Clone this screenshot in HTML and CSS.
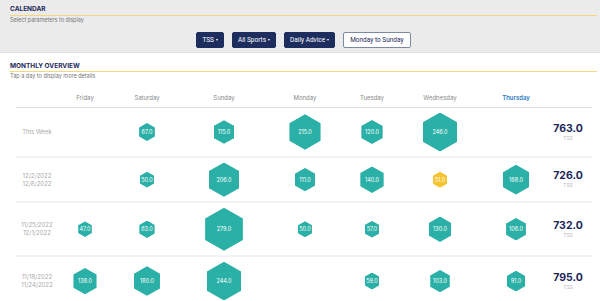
FILE: index.html
```html
<!DOCTYPE html>
<html lang="en">
<head>
  <meta charset="UTF-8">
  <meta name="viewport" content="width=device-width, initial-scale=1.0">
  <title>Calendar – Monthly Overview</title>
  <link rel="stylesheet" href="styles.css">
</head>
<body>
  <div class="top">
    <h2 class="sec-title">CALENDAR</h2>
    <p class="sec-sub">Select parameters to display</p>
    <div class="filters">
      <button class="btn">TSS <span class="caret"></span></button>
      <button class="btn">All Sports <span class="caret"></span></button>
      <button class="btn">Daily Advice <span class="caret"></span></button>
      <button class="btn btn-light">Monday to Sunday</button>
    </div>
  </div>

  <div class="overview">
    <h2 class="sec-title">MONTHLY OVERVIEW</h2>
    <p class="sec-sub">Tap a day to display more details</p>

    <div class="cal">
      <div class="row head">
        <div></div>
        <div>Friday</div>
        <div>Saturday</div>
        <div>Sunday</div>
        <div>Monday</div>
        <div>Tuesday</div>
        <div>Wednesday</div>
        <div class="today">Thursday</div>
        <div></div>
      </div>

      <div class="row">
        <div class="label">This Week</div>
        <div></div>
        <div><span class="hex" style="--h:17.9px">67.0</span></div>
        <div><span class="hex" style="--h:23.6px">115.0</span></div>
        <div><span class="hex" style="--h:35.4px">215.0</span></div>
        <div><span class="hex" style="--h:24.2px">120.0</span></div>
        <div><span class="hex" style="--h:39px">246.0</span></div>
        <div></div>
        <div class="total"><b>763.0</b><small>TSS</small></div>
      </div>

      <div class="row">
        <div class="label">12/2/2022<br>12/8/2022</div>
        <div></div>
        <div><span class="hex" style="--h:15.9px">50.0</span></div>
        <div><span class="hex" style="--h:34.3px">206.0</span></div>
        <div><span class="hex" style="--h:23.1px">111.0</span></div>
        <div><span class="hex" style="--h:26.5px">140.0</span></div>
        <div><span class="hex low" style="--h:16px">51.0</span></div>
        <div><span class="hex" style="--h:29.8px">168.0</span></div>
        <div class="total"><b>726.0</b><small>TSS</small></div>
      </div>

      <div class="row">
        <div class="label">11/25/2022<br>12/1/2022</div>
        <div><span class="hex" style="--h:15.5px">47.0</span></div>
        <div><span class="hex" style="--h:17.4px">63.0</span></div>
        <div><span class="hex" style="--h:42.9px">279.0</span></div>
        <div><span class="hex" style="--h:15.9px">50.0</span></div>
        <div><span class="hex" style="--h:16.7px">57.0</span></div>
        <div><span class="hex" style="--h:25.3px">130.0</span></div>
        <div><span class="hex" style="--h:22.5px">106.0</span></div>
        <div class="total"><b>732.0</b><small>TSS</small></div>
      </div>

      <div class="row">
        <div class="label">11/18/2022<br>11/24/2022</div>
        <div><span class="hex" style="--h:26.3px">138.0</span></div>
        <div><span class="hex" style="--h:29.5px">180.0</span></div>
        <div><span class="hex" style="--h:38.8px">244.0</span></div>
        <div></div>
        <div><span class="hex" style="--h:17px">59.0</span></div>
        <div><span class="hex" style="--h:22.2px">103.0</span></div>
        <div><span class="hex" style="--h:20.7px">91.0</span></div>
        <div class="total"><b>795.0</b><small>TSS</small></div>
      </div>
    </div>
  </div>
</body>
</html>
```

FILE: styles.css
```css
body {
  margin: 0;
  font-family: Inter, 'Noto Sans', sans-serif;
  background: #fff;
  color: #333;
}
.top {
  background: #ebebeb;
  padding: 5px 0 4px 0;
  border-bottom: 1px solid #e2e2e2;
}
.sec-title {
  margin: 0 3px 0 10px;
  font-size: 6.5px;
  line-height: 9px;
  font-weight: 700;
  color: #1e2a5a;
  padding-bottom: 1px;
  border-bottom: 1px solid #f6d77e;
}
.sec-sub {
  margin: 1px 0 0 10px;
  font-size: 5.5px;
  line-height: 7px;
  color: #777;
}
.filters {
  display: flex;
  justify-content: center;
  gap: 8px;
  margin-top: 8px;
  padding-left: 7px;
}
.btn {
  height: 16px;
  padding: 0 5px;
  border: 1px solid #1c2d5e;
  border-radius: 2px;
  background: #1c2d5e;
  color: #fff;
  font-family: Roboto, Inter, sans-serif;
  font-size: 6.5px;
  font-weight: 400;
  display: flex;
  align-items: center;
  gap: 2px;
}
.btn-light {
  background: #fff;
  color: #1e2a5a;
  border-color: #7d88a3;
  padding: 0 6px;
}
.caret {
  width: 0;
  height: 0;
  border-left: 1.5px solid transparent;
  border-right: 1.5px solid transparent;
  border-top: 2px solid #fff;
}
.overview {
  padding-top: 9px;
}
.overview .sec-title {
  padding-bottom: 0;
}
.cal {
  margin: 8px 8px 0 16px;
}
.row {
  display: grid;
  grid-template-columns: 42px 54px 70px 84px 78px 56px 80px 72px 40px;
  align-items: center;
  justify-items: center;
  padding: 4.5px 0;
  border-bottom: 2px solid #f2f2f2;
}
.row.head {
  height: 19px;
  padding: 0;
  border-bottom: 1px solid #dedede;
  font-size: 6px;
  color: #888;
}
.row.head .today {
  color: #2b7bc0;
  font-weight: 600;
}
.label {
  font-size: 6px;
  line-height: 8px;
  color: #aaa;
  text-align: center;
}
.hex {
  display: flex;
  align-items: center;
  justify-content: center;
  height: var(--h);
  width: calc(var(--h) * 0.88);
  background: #2ab0a6;
  clip-path: polygon(50% 0, 100% 25%, 100% 75%, 50% 100%, 0 75%, 0 25%);
  color: #fff;
  font-size: 5.5px;
  white-space: nowrap;
}
.hex.low {
  background: #f6c22f;
}
.total {
  display: flex;
  flex-direction: column;
  align-items: center;
  padding-right: 8px;
}
.total b {
  font-size: 10.5px;
  line-height: 12px;
  font-weight: 700;
  color: #1b2658;
}
.total small {
  font-size: 5px;
  line-height: 7px;
  color: #bbb;
}
```
